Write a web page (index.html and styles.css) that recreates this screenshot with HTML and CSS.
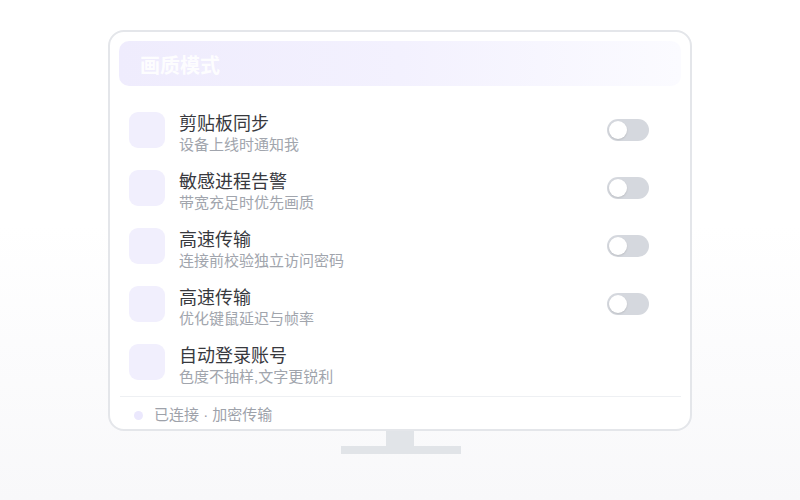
FILE: index.html
```html
<!DOCTYPE html>
<html lang="zh-CN">
<head>
<meta charset="utf-8">
<title>画质模式</title>
<link rel="stylesheet" href="styles.css">
</head>
<body>
<div class="stage">
  <div class="monitor">
    <div class="header">画质模式</div>
    <div class="list">
      <div class="row">
        <div class="icon"></div>
        <div class="text"><div class="title">剪贴板同步</div><div class="sub">设备上线时通知我</div></div>
        <div class="toggle"><span class="knob"></span></div>
      </div>
      <div class="row">
        <div class="icon"></div>
        <div class="text"><div class="title">敏感进程告警</div><div class="sub">带宽充足时优先画质</div></div>
        <div class="toggle"><span class="knob"></span></div>
      </div>
      <div class="row">
        <div class="icon"></div>
        <div class="text"><div class="title">高速传输</div><div class="sub">连接前校验独立访问密码</div></div>
        <div class="toggle"><span class="knob"></span></div>
      </div>
      <div class="row">
        <div class="icon"></div>
        <div class="text"><div class="title">高速传输</div><div class="sub">优化键鼠延迟与帧率</div></div>
        <div class="toggle"><span class="knob"></span></div>
      </div>
      <div class="row">
        <div class="icon"></div>
        <div class="text"><div class="title">自动登录账号</div><div class="sub">色度不抽样,文字更锐利</div></div>
      </div>
    </div>
    <div class="footer"><span class="dot"></span><span class="status">已连接 · 加密传输</span></div>
  </div>
  <div class="neck"></div>
  <div class="base"></div>
</div>
</body>
</html>
```

FILE: styles.css
```css
* { box-sizing: border-box; }
html, body { margin: 0; padding: 0; }
body {
  width: 800px;
  height: 500px;
  background: linear-gradient(180deg, #ffffff 0%, #ffffff 45%, #f8f8fa 100%);
  font-family: "Noto Sans CJK SC", "Noto Sans", sans-serif;
  overflow: hidden;
}
.stage {
  height: 500px;
  padding-top: 30px;
  display: flex;
  flex-direction: column;
  align-items: center;
}
.monitor {
  width: 584px;
  height: 401px;
  border: 2px solid #e4e6ea;
  border-radius: 16px;
  background: #ffffff;
  padding: 9px 9px 3px;
  display: flex;
  flex-direction: column;
}
.header {
  height: 45px;
  border-radius: 10px;
  background: linear-gradient(90deg, #efecfd 0%, #f3f1fe 50%, #fbfbff 100%);
  padding: 2px 0 0 21px;
  display: flex;
  align-items: center;
  font-size: 20px;
  font-weight: 700;
  color: rgba(255, 255, 255, 0.92);
}
.list {
  padding: 26px 32px 10px 10px;
  display: flex;
  flex-direction: column;
  gap: 16px;
}
.row {
  height: 42px;
  display: flex;
  align-items: flex-start;
  gap: 14px;
}
.icon {
  width: 36px;
  height: 36px;
  border-radius: 9px;
  background: #f1effd;
  flex: none;
}
.text {
  flex: 1;
  padding-top: 1px;
}
.title {
  font-family: "Liberation Sans", "Noto Sans CJK SC", sans-serif;
  font-size: 18px;
  line-height: 22px;
  color: #38393e;
}
.sub {
  font-family: "Liberation Sans", "Noto Sans CJK SC", sans-serif;
  font-size: 15px;
  line-height: 20px;
  color: #a1a5ad;
}
.toggle {
  width: 42px;
  height: 22px;
  margin-top: 7px;
  border-radius: 11px;
  background: #d5d8de;
  padding: 2px;
  flex: none;
}
.knob {
  display: block;
  width: 18px;
  height: 18px;
  border-radius: 50%;
  background: #ffffff;
  box-shadow: 0 1px 2px rgba(0, 0, 0, 0.12);
}
.footer {
  border-top: 1px solid #eef0f3;
  margin-left: 1px;
  padding: 8px 0 0 14px;
  display: flex;
  align-items: flex-start;
  gap: 11px;
  height: 30px;
}
.dot {
  width: 9px;
  height: 9px;
  margin-top: 6px;
  border-radius: 50%;
  background: #ebe8fd;
  flex: none;
}
.status {
  font-family: "Liberation Sans", "Noto Sans CJK SC", sans-serif;
  font-size: 15px;
  line-height: 20px;
  color: #9ea2aa;
}
.neck {
  width: 28px;
  height: 15px;
  background: #e1e4e8;
}
.base {
  width: 120px;
  height: 8px;
  background: #e1e4e8;
  margin-left: 1px;
}
```
